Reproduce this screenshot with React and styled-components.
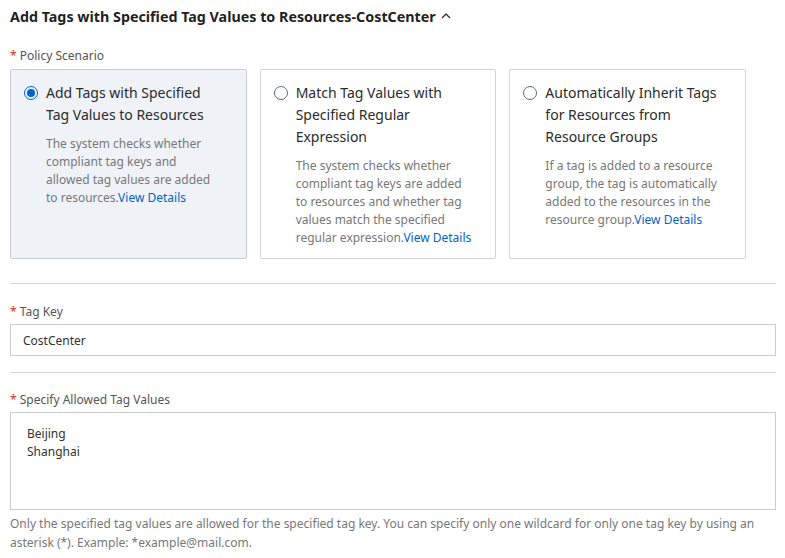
import React from 'react'
import styled, { createGlobalStyle } from 'styled-components'

const Global = createGlobalStyle`
  body {
    margin: 0;
    background: #fff;
    font-family: "Noto Sans", "Open Sans", sans-serif;
    color: #333;
  }
`

const Page = styled.div`
  width: 785px;
  padding: 0 10px 0 10px;
  box-sizing: border-box;
`

const Header = styled.div`
  display: flex;
  align-items: center;
  gap: 4px;
  height: 32px;
  font-size: 14.3px;
  font-weight: 700;
  color: #1f1f1f;
`

const Label = styled.div`
  font-size: 12px;
  color: #555;
  line-height: 16px;
  margin-top: ${p => p.$top || 0}px;
  margin-bottom: ${p => p.$bottom ?? 4}px;
  &::before {
    content: "* ";
    color: #d93026;
  }
`

const Cards = styled.div`
  display: flex;
  gap: 13px;
  width: 736px;
`

const Card = styled.div`
  flex: 1;
  height: 190px;
  box-sizing: border-box;
  border: 1px solid ${p => (p.$active ? '#c8ccd4' : '#d2d4d8')};
  background: ${p => (p.$active ? '#eff3f8' : '#fff')};
  border-radius: 2px;
  padding: 12px 0 0 13px;
  display: flex;
  gap: 8px;
`

const Radio = styled.span`
  flex: none;
  width: 14px;
  height: 14px;
  margin-top: 4px;
  border-radius: 50%;
  box-sizing: border-box;
  border: 1px solid ${p => (p.$checked ? '#0064c8' : '#5f6b7d')};
  display: flex;
  align-items: center;
  justify-content: center;
  &::after {
    content: "";
    display: ${p => (p.$checked ? 'block' : 'none')};
    width: 8px;
    height: 8px;
    border-radius: 50%;
    background: #0064c8;
  }
`

const CardBody = styled.div`
  width: ${p => p.$w}px;
  display: flex;
  flex-direction: column;
`

const CardTitle = styled.div`
  font-size: 14px;
  line-height: 22px;
  color: #2b2b2b;
  margin-bottom: 9px;
`

const CardDesc = styled.div`
  font-size: 12px;
  line-height: 18px;
  color: #777;
`

const Link = styled.a`
  color: #0064c8;
  text-decoration: none;
`

const Divider = styled.hr`
  border: none;
  border-top: 1px solid #d5d7db;
  margin: ${p => p.$m || '24px 0 0 0'};
  width: 766px;
`

const Input = styled.div`
  height: 32px;
  box-sizing: border-box;
  border: 1px solid #c9ccd1;
  display: flex;
  align-items: center;
  padding-left: 12px;
  font-size: 12px;
  color: #333;
  width: 766px;
`

const TextArea = styled.div`
  height: 98px;
  box-sizing: border-box;
  border: 1px solid #c9ccd1;
  padding: 12px 0 0 16px;
  font-size: 12px;
  line-height: 18px;
  color: #333;
  width: 766px;
`

const Help = styled.div`
  font-size: 12px;
  line-height: 19px;
  color: #777;
  margin-top: 4px;
  width: 775px;
`

const scenarios = [
  {
    title: 'Add Tags with Specified Tag Values to Resources',
    desc: 'The system checks whether compliant tag keys and allowed tag values are added to resources.',
    active: true,
    w: 174,
  },
  {
    title: 'Match Tag Values with Specified Regular Expression',
    desc: 'The system checks whether compliant tag keys are added to resources and whether tag values match the specified regular expression.',
    w: 179,
  },
  {
    title: 'Automatically Inherit Tags for Resources from Resource Groups',
    desc: 'If a tag is added to a resource group, the tag is automatically added to the resources in the resource group.',
    w: 176,
  },
]

const App = () => {
  return (
    <Page>
      <Global />
      <Header>
        Add Tags with Specified Tag Values to Resources-CostCenter
        <svg width="12" height="12" viewBox="0 0 12 12" fill="none">
          <path d="M2 8 L6 4 L10 8" stroke="#333" strokeWidth="1.3" />
        </svg>
      </Header>
      <Label $top={16} $bottom={5}>Policy Scenario</Label>
      <Cards>
        {scenarios.map(s => (
          <Card key={s.title} $active={s.active}>
            <Radio $checked={s.active} />
            <CardBody $w={s.w}>
              <CardTitle>{s.title}</CardTitle>
              <CardDesc>
                {s.desc}
                <Link href="#">View Details</Link>
              </CardDesc>
            </CardBody>
          </Card>
        ))}
      </Cards>
      <Divider $m="24px 0 0 0" />
      <Label $top={20}>Tag Key</Label>
      <Input>CostCenter</Input>
      <Divider $m="16px 0 0 0" />
      <Label $top={19}>Specify Allowed Tag Values</Label>
      <TextArea>
        Beijing
        <br />
        Shanghai
      </TextArea>
      <Help>
        Only the specified tag values are allowed for the specified tag key. You can specify only one wildcard for only one tag key by using an asterisk (*). Example: *example@mail.com.
      </Help>
    </Page>
  )
}

export default App
